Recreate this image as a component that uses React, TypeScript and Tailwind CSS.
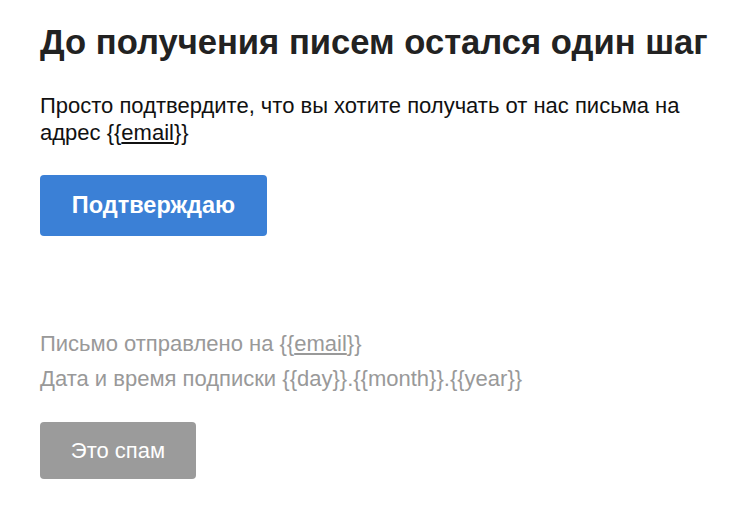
export default function App() {
  return (
    <div className="w-[750px] h-[516px] bg-white px-10 pt-[22px] font-['Liberation_Sans',Arial,sans-serif]">
      <h1 className="font-bold text-[34.6px] leading-[40px] text-[#222]">
        До получения писем остался один шаг
      </h1>
      <p className="mt-[30px] text-[22px] leading-[27px] text-[#111]">
        Просто подтвердите, что вы хотите получать от нас письма на адрес <span>{"{{"}<span className="underline">email</span>{"}}"}</span>
      </p>
      <button className="mt-[29px] w-[227px] h-[61px] rounded-[4px] bg-[#3b80d6] text-white font-bold text-[23.5px] flex items-center justify-center">
        Подтверждаю
      </button>
      <div className="mt-[90px] text-[#999] text-[22px] leading-[35px]">
        <div>
          Письмо отправлено на {"{{"}<span className="underline">email</span>{"}}"}
        </div>
        <div>Дата и время подписки {"{{day}}.{{month}}.{{year}}"}</div>
      </div>
      <button className="mt-[26px] w-[156px] h-[57px] rounded-[4px] bg-[#9b9b9b] text-white text-[22px] flex items-center justify-center">
        Это спам
      </button>
    </div>
  );
}
